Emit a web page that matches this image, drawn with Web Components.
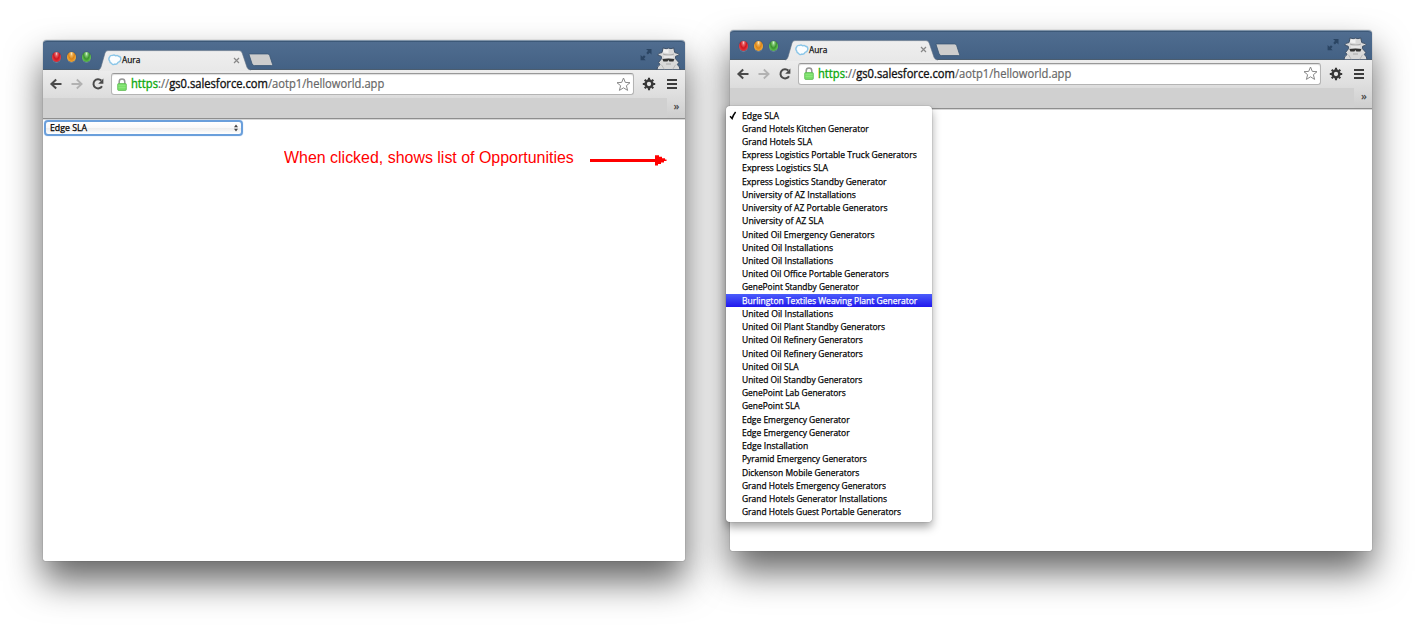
<!DOCTYPE html>
<html lang="en"><head><meta charset="utf-8"><title>Aura</title>
<style>
body{margin:0;width:1415px;height:627px;overflow:hidden;background:#fff;font-family:"Open Sans","Noto Sans",sans-serif;color:#000}
</style></head><body>
<aura-scene></aura-scene>
<script>
function define(name, html, ready){
  const t=document.createElement('template');t.innerHTML=html;
  customElements.define(name,class extends HTMLElement{
    constructor(){super();this.attachShadow({mode:'open'}).append(t.content.cloneNode(true));}
    connectedCallback(){if(ready)ready(this,this.shadowRoot);}
  });
}
/* a single line of text, condensed or widened to the width given */
define('fit-text',`<style>:host{display:block;white-space:nowrap;overflow:visible}span{display:inline-block;transform-origin:0 50%}</style><span><slot></slot></span>`,(h,r)=>{
  const w=+h.getAttribute('w');h.style.width=w+'px';
  const s=r.querySelector('span');s.style.transform='scaleX('+(w/s.offsetWidth)+')';
});
const icons={
 cloud:[14,12,'<path d="M1.5 3.2Q2.2 1 4.7 1.4Q6.2.6 7.6 1.8Q9.5 1 10.4 2.2Q13.1 2.6 12.8 5.2Q12.6 7.6 10.1 8.3Q8.8 10.7 6.6 10.1Q4.5 11.4 3.4 9.3Q1.8 8.9 1.7 7Q.1 5 1.5 3.2Z" fill="#fafdff" stroke="#8ac6e8" stroke-width="1.4"/>'],
 back:[14,14,'<path d="M12.5 7H3M7.2 2.5L2.4 7l4.8 4.5" fill="none" stroke="#4a4a4a" stroke-width="2"/>'],
 forward:[14,14,'<path d="M1.5 7H11M6.8 2.5L11.6 7l-4.8 4.5" fill="none" stroke="#b2b2b2" stroke-width="1.8"/>'],
 reload:[14,14,'<path d="M10.3 3.5A4.6 4.6 0 1 0 11 9.2" fill="none" stroke="#4a4a4a" stroke-width="2"/><path d="M12.4 1.5v5.3H7.2Z" fill="#4a4a4a"/>'],
 lock:[10,13,'<path d="M2.2 7V3.8C2.2.2 7.8.2 7.8 3.8V7" fill="none" stroke="#969696" stroke-width="1.5"/><rect x=".7" y="5.6" width="8.6" height="6.8" rx=".8" fill="#7be06b" stroke="#5cb850" stroke-width=".8"/><path d="M1.4 7.6h7.2M1.4 9.5h7.2" stroke="#97ed86" stroke-width=".6"/>'],
 star:[15,15,'<path d="M7.5 1l1.8 4.4 4.7.3-3.6 3 1.2 4.7-4.1-2.6-4.1 2.6 1.2-4.7-3.6-3 4.7-.3Z" fill="#fff" stroke="#888" stroke-width="1"/>'],
 gear:[14,14,'<circle cx="7" cy="7" r="3.4" fill="none" stroke="#373737" stroke-width="2.5"/><path d="M7 .8v2.2M7 11v2.2M.8 7h2.2M11 7h2.2M2.7 2.7L4 4M10 10l1.3 1.3M2.7 11.3L4 10M10 4l1.3-1.3" stroke="#373737" stroke-width="2.1"/>'],
 menu:[12,12,'<path d="M1 2h10M1 6h10M1 10h10" stroke="#3c3c3c" stroke-width="2"/>'],
 full:[12,13,'<path d="M6 1h5.5v5.5L9.7 4.8 7.9 6.5 6.3 5 8 2.8ZM.6 7l1.8 1.8L4 7.3l1.6 1.5L4 10.6 5.7 12.3H.6Z" fill="#2b4563"/>'],
 spy:[25,23,'<path d="M1 22.8Q.9 19.6 4 17.6L2.6 15.4 5.6 11.6 5.2 9.2 2.2 8.4Q1.8 7 3 6.3L6 5.6 7.1.9l3 .8 2.4-.6 2.5.6 2.7-.8 1.1 4.7 3.6 1Q23.4 7.5 22.4 8.4L19.7 9.2 19.4 11.6 22.8 15.4 21.4 17.6Q24 19.6 24 22.8Z" fill="#d9d9d9" stroke="#3e5067" stroke-width="1"/><path d="M7.9 2l2.2.8 2.4-.6v4L7 5.6Z" fill="#f1f1f1"/><path d="M7 6.6q5.7 2 11 0l-.2 1.2q-5.3 1-10.6 0Z" fill="#aaa"/><path d="M6.4 12q6.2-.8 12 0l-1 2.4-4 .2-1-1.5-1 1.5-4-.2Z" fill="#333"/><path d="M10 17h5" stroke="#aaa"/><path d="M5.5 17.8l2.7 4.4M19.5 17.8l-2.7 4.4" stroke="#b8b8b8" stroke-width="1"/><path d="M8 10h9" stroke="#f5f5f5" stroke-width="1.1"/>'],
 newtab:[26,14,'<path d="M1 1.6Q.6.9 1.8.9H19.4q1.6 0 2.2 1.3L24.6 11.5q.2 1.1-1 1.1H6.4q-1.6 0-2.3-1.6Z" fill="#cdcdcd" stroke="#3d5977" stroke-width=".9"/>'],
 updown:[6,8,'<path d="M3 .6L5 3.2H1ZM3 7.4L1 4.8h4Z" fill="#444"/>'],
 arrow:[78,12,'<path d="M0 5.5H70" stroke="red" stroke-width="3"/><path d="M65 .3h4v1.4h3v1.5h3v1.4h1.5v1.4H74V7.5h-3v1.6h-3V10.5h-3Z" fill="red"/>'],
 check:[8,9,'<path d="M1.1 5.2L3.1 7.5Q4.3 3.6 6.6.9" fill="none" stroke="#000" stroke-width="1.5"/>']
};
define('ui-icon','<style>:host{display:block;flex:none;line-height:0}svg{display:block}</style><div></div>',(h,r)=>{
  const i=icons[h.getAttribute('name')];
  r.querySelector('div').innerHTML='<svg width="'+i[0]+'" height="'+i[1]+'" viewBox="0 0 '+i[0]+' '+i[1]+'">'+i[2]+'</svg>';
});
define('window-lights',`<style>:host{display:flex;gap:6px}i{width:9px;height:10px;border-radius:50%;box-shadow:0 0 1px #1b2d42,0 1px 0 #6d87a5}
.r{background:radial-gradient(ellipse at 50% 18%,#fbd5d5 0,#e8696d 16%,#cf1620 45%,#e5383f 72%,#ff8d88)}
.y{background:radial-gradient(ellipse at 50% 18%,#fdeecb 0,#f0b860 16%,#dc8416 45%,#f0a838 72%,#ffe485)}
.g{background:radial-gradient(ellipse at 50% 18%,#e2f8dc 0,#8ccf80 16%,#3c932f 45%,#60c44f 72%,#b0f398)}</style><i class="r"></i><i class="y"></i><i class="g"></i>`);
define('browser-tab',`<style>:host{display:block;width:154px;height:21px;position:relative;font-size:9px;-webkit-text-stroke:.25px #222}
svg{position:absolute;inset:0}.c{position:relative;display:flex;align-items:center;height:20px;padding:0 12px 0 10px}
fit-text{line-height:12px}.x{margin-left:auto}.x path{stroke:#888;stroke-width:1.2}.sp{flex:1}.k{position:static}</style>
<svg width="154" height="21"><defs><linearGradient id="g" x2="0" y2="1"><stop stop-color="#efefef"/><stop offset="1" stop-color="#e8e8e8"/></linearGradient></defs><path d="M0 20.5Q2.3 19.5 3 17L7 3Q7.8.6 10 .6H141Q143.3.6 144.2 3L149 17.3Q150 20 153 20.5V21H0Z" fill="url(#g)"/><path d="M0 20Q2.3 19.5 3 17L7 3Q7.8.6 10 .6H141Q143.3.6 144.2 3L149 17.3Q150 20 153 20" fill="none" stroke="#5a6c80" stroke-width=".6"/></svg>
<div class="c"><ui-icon name="cloud"></ui-icon><fit-text w="18.5" style="flex:none;margin-left:0">Aura</fit-text><div class="sp"></div><svg class="k x" width="7" height="7"><path d="M1 1l5 5M6 1L1 6"/></svg></div>`);
define('url-box',`<style>:host{display:flex;align-items:center;box-sizing:border-box;width:523px;height:22px;background:#fff;border:1px solid #b4b4b4;border-top-color:#989898;border-radius:3px;padding:0 2px 0 4.5px;box-shadow:inset 0 1px 1px #ddd;font-size:12px}
fit-text{line-height:18px;color:#666;margin:0 auto 0 4.5px;-webkit-text-stroke:.2px currentColor}b{font-weight:500;color:#111;-webkit-text-stroke:.35px #111}em{font-style:normal;color:#0ca80c;-webkit-text-stroke:.35px #0ca80c}</style>
<ui-icon name="lock"></ui-icon><fit-text w="253.5"><em>https</em>://<b>gs0.salesforce.com</b>/aotp1/helloworld.app</fit-text><ui-icon name="star"></ui-icon>`);
define('browser-window',`<style>
:host{display:flex;flex-direction:column;box-sizing:border-box;width:642px;height:521px;border-radius:4px 4px 2px 2px;background:#fff;box-shadow:0 20px 36px rgba(0,0,0,.61),0 0 1px rgba(0,0,0,.65)}
.title{display:flex;background:linear-gradient(#506d90,#436184);border-top:1px solid #8295a9;border-radius:4px 4px 0 0;box-sizing:border-box;height:30px;box-shadow:inset 0 1px #3c5877,inset 0 -1px #4b5d6f;padding-left:8.5px;align-items:flex-start}
window-lights{margin-top:10.5px;margin-right:7px}browser-tab{margin-top:9px}
.title>.n{margin:12px 0 0 -3.5px}.sp{flex:1}.title>.f{margin:7px 4px 0 0}.title>.s{margin:6px 4px 0 0}
.tools{display:flex;align-items:center;height:28px;background:linear-gradient(#ededed,#dcdcdc);padding:0 7px 0 5.5px;box-sizing:border-box}
.tools>.a{margin-right:7px}.tools>.l{margin-right:6.5px}.tools>.gear{margin-left:7.5px}.tools>.menu{margin-left:10px;margin-right:auto}
.marks{background:#d0d0d0;border-bottom:1px solid #8e8e8e;box-shadow:0 1px #d7d7d7;display:flex;justify-content:flex-end;box-sizing:border-box;height:21px}
.more{width:18px;background:linear-gradient(#dcdcdc,#cecece);font-size:10.5px;line-height:17px;text-align:center;text-indent:1px;color:#444;font-weight:600}.page{flex:1;padding-top:1px}</style>
<div class="title"><window-lights></window-lights><browser-tab></browser-tab><ui-icon class="n" name="newtab"></ui-icon><div class="sp"></div><ui-icon class="f" name="full"></ui-icon><ui-icon class="s" name="spy"></ui-icon></div>
<div class="tools"><ui-icon class="a" name="back"></ui-icon><ui-icon class="a" name="forward"></ui-icon><ui-icon class="l" name="reload"></ui-icon><url-box></url-box><ui-icon class="gear" name="gear"></ui-icon><ui-icon class="menu" name="menu"></ui-icon></div>
<div class="marks"><div class="more">»</div></div><div class="page"><slot></slot></div>`);
define('select-box',`<style>:host{display:flex;align-items:center;justify-content:space-between;box-sizing:border-box;width:199px;height:16px;margin-left:1px;border:2px solid #6a9fdb;border-radius:4px;background:linear-gradient(#fff,#f8f8f8 50%,#ececec 51%,#fff);box-shadow:0 0 1px #7baee4;padding:0 2.5px 0 4px;font-size:9px;font-weight:500;-webkit-text-stroke:.25px #000}fit-text{line-height:12px}</style><fit-text w="37">Edge SLA</fit-text><ui-icon name="updown"></ui-icon>`);
define('red-note',`<style>:host{display:flex;align-items:center;gap:16px;margin:12px 0 0 241px;color:red;font:16px/20px "Liberation Sans",Arial,sans-serif}ui-icon{margin-top:5px}</style><fit-text w="290">When clicked, shows list of Opportunities</fit-text><ui-icon name="arrow"></ui-icon>`);
define('menu-item',`<style>:host{display:flex;align-items:center;height:13.22px;font-size:9px;font-weight:500;-webkit-text-stroke:.25px currentColor}.m{width:15.5px;padding-left:3px;box-sizing:border-box}fit-text{line-height:13px}:host([selected]){color:#fff;background:linear-gradient(#4b5dfb,#2118ed)}</style><div class="m"></div><slot></slot>`,(h,r)=>{if(h.hasAttribute('checked'))r.querySelector('.m').innerHTML='<ui-icon name="check"></ui-icon>';});
const rows=[['Edge SLA',37],['Grand Hotels Kitchen Generator',127],['Grand Hotels SLA',70],['Express Logistics Portable Truck Generators',175],['Express Logistics SLA',86],['Express Logistics Standby Generator',145],['University of AZ Installations',114],['University of AZ Portable Generators',145],['University of AZ SLA',81],['United Oil Emergency Generators',132],['United Oil Installations',91],['United Oil Installations',91],['United Oil Office Portable Generators',147],['GenePoint Standby Generator',117],['Burlington Textiles Weaving Plant Generator',175],['United Oil Installations',91],['United Oil Plant Standby Generators',143],['United Oil Refinery Generators',121],['United Oil Refinery Generators',121],['United Oil SLA',57],['United Oil Standby Generators',120],['GenePoint Lab Generators',103.5],['GenePoint SLA',58],['Edge Emergency Generator',108],['Edge Emergency Generator',108],['Edge Installation',66],['Pyramid Emergency Generators',124.5],['Dickenson Mobile Generators',117],['Grand Hotels Emergency Generators',144],['Grand Hotels Generator Installations',145],['Grand Hotels Guest Portable Generators',159]];
define('option-menu',`<style>:host{display:block;position:absolute;left:-4px;top:76px;width:206px;height:416px;box-sizing:border-box;padding-top:3px;background:rgba(255,255,255,.98);border-radius:4px;box-shadow:0 5px 10px rgba(0,0,0,.36),0 0 1px rgba(0,0,0,.65)}</style><div></div>`,(h,r)=>{
 r.querySelector('div').innerHTML=rows.map((o,i)=>'<menu-item'+(i===0?' checked':i===14?' selected':'')+'><fit-text w="'+o[1]+'">'+o[0]+'</fit-text></menu-item>').join('');
});
define('aura-scene',`<style>:host{display:flex;box-sizing:border-box;width:1415px;height:627px;padding-left:43px;gap:45.4px;align-items:flex-start}.one{margin-top:40px}.two{margin-top:29.5px;position:relative}</style>
<browser-window class="one"><select-box></select-box><red-note></red-note></browser-window><browser-window class="two"><option-menu></option-menu></browser-window>`);
</script></body></html>
